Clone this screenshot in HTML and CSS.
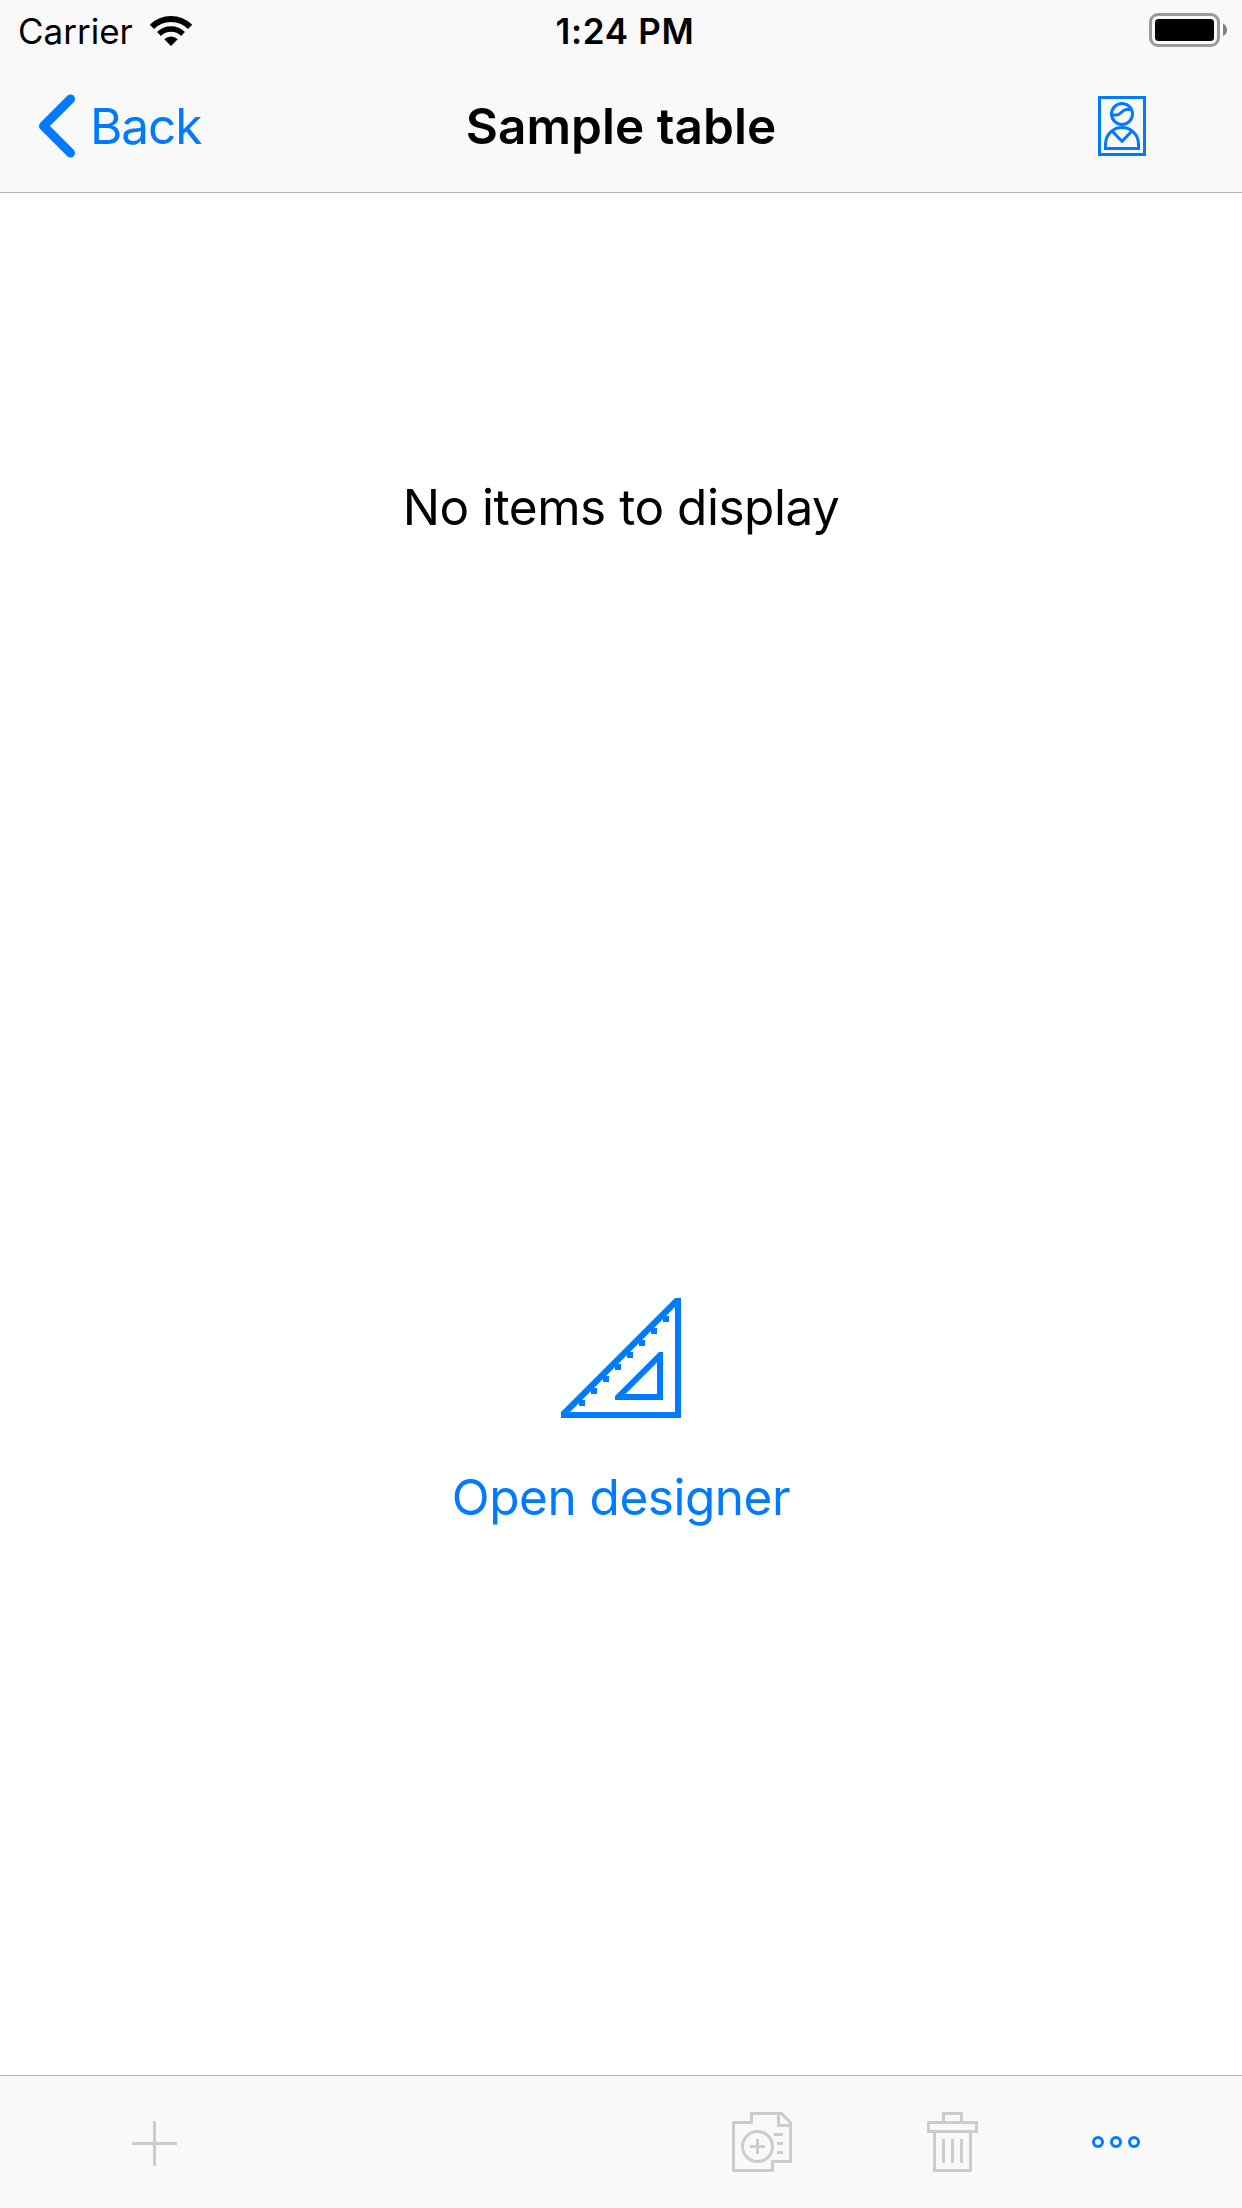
FILE: index.html
```html
<!DOCTYPE html>
<html lang="en">
<head>
<meta charset="utf-8">
<title>Sample table</title>
<link rel="stylesheet" href="styles.css">
</head>
<body>
<div class="screen">
  <header class="header">
    <div class="status">
      <div class="status-left">
        <span class="carrier">Carrier</span>
        <svg class="wifi" width="42" height="31" viewBox="0 0 42 31">
          <path d="M1.9 11.9A27 27 0 0 1 40.1 11.9" stroke-width="6"/>
          <path d="M9 19A17 17 0 0 1 33 19" stroke-width="5.5"/>
          <path class="solid" d="M21 31L14.3 24.3A9.5 9.5 0 0 1 27.7 24.3Z"/>
        </svg>
      </div>
      <span class="time">1:24 PM</span>
      <svg class="battery" width="79" height="34" viewBox="0 0 79 34">
        <rect x="1.5" y="1.5" width="68" height="31" rx="7.5" fill="none" stroke="#999" stroke-width="3"/>
        <rect x="6" y="6" width="59" height="22" rx="3.5"/>
        <path d="M74 10.5C77 12 78 14.500 78 17S77 21.500 74 23Z" fill="#808080"/>
      </svg>
    </div>
    <nav class="navbar">
      <a class="back">
        <svg width="38" height="64" viewBox="0 0 38 64"><path d="M32.500 5L5.500 32L32.500 59"/></svg>
        <span>Back</span>
      </a>
      <h1 class="title">Sample table</h1>
      <svg class="icon profile" width="48" height="60" viewBox="0 0 48 60">
        <rect x="1.5" y="1.5" width="45" height="57"/>
        <circle cx="24" cy="18" r="10.5"/>
        <path d="M13.500 19H18.500C23 19 24 13.500 28.500 13.500H33"/>
        <path d="M7.500 52.500V48A16.500 16.500 0 0 1 40.500 48V52.500Z"/>
        <path d="M14.500 35.500L24 45.300L33.500 35.500"/>
      </svg>
    </nav>
  </header>
  <main class="content">
    <p class="empty">No items to display</p>
    <a class="designer">
      <svg width="120" height="120" viewBox="0 0 120 120">
        <path fill-rule="evenodd" d="M0 120V114L114 0H120V120ZM9 114H114V9Z"/>
        <path fill-rule="evenodd" d="M54 102V98L98 54H102V102ZM64.500 96H96V64.500Z"/>
        <path d="M18 102h6v6h-6zM30 90h6v6h-6zM42 78h6v6h-6zM54 66h6v6h-6zM66 54h6v6h-6zM78 42h6v6h-6zM90 30h6v6h-6zM102 18h6v6h-6z"/>
      </svg>
      <span>Open designer</span>
    </a>
  </main>
  <footer class="toolbar">
    <svg class="icon add" width="45" height="45" viewBox="0 0 45 45"><path d="M22.500 0V45M0 22.500H45"/></svg>
    <svg class="icon copy" width="60" height="60" viewBox="0 0 60 60">
      <path d="M1.500 10.500H19.500V1.500H49.500L58.500 10.500V49.500H40.500V58.500H1.500Z"/>
      <path d="M46.500 1.500V13.500H58.500"/>
      <circle cx="25.500" cy="34.500" r="15"/>
      <path d="M25.500 27V42M18 34.500H33M42 22.500H51M45 31.500H51M45 40.500H51"/>
    </svg>
    <svg class="icon trash" width="51" height="60" viewBox="0 0 51 60">
      <path d="M16.500 10.500V1.500H34.500V10.500"/>
      <rect x="1.500" y="10.500" width="48" height="9"/>
      <path d="M7.500 19.500V58.500H43.500V19.500M16.500 27V51M25.500 27V51M34.500 27V51"/>
    </svg>
    <svg class="icon more" width="48" height="12" viewBox="0 0 48 12">
      <circle cx="6" cy="6" r="4.500"/><circle cx="24" cy="6" r="4.500"/><circle cx="42" cy="6" r="4.500"/>
    </svg>
  </footer>
</div>
</body>
</html>
```
FILE: styles.css
```css
* { box-sizing: border-box; margin: 0; }
body { background: #fff; font-family: Inter, "Liberation Sans", sans-serif; color: #000; }
svg { display: block; flex: none; }
.screen { width: 1242px; height: 2208px; display: flex; flex-direction: column; }
.header { height: 193px; background: #f9f9f9; border-bottom: 1px solid #b2b2b2; }
.status { height: 60px; display: grid; grid-template-columns: 1fr auto 1fr; align-items: center; font-size: 35px; line-height: 58px; padding: 0 14px 0 18px; }
.status-left { display: flex; align-items: center; }
.carrier { padding-top: 2px; width: 132px; white-space: nowrap; }
.wifi { fill: none; stroke: #000; }
.wifi .solid { fill: #000; stroke: none; }
.time { padding: 2px 0 0 4px; font-weight: 600; letter-spacing: 0.7px; white-space: nowrap; }
.battery { justify-self: end; }
.navbar { height: 132px; display: grid; grid-template-columns: 1fr auto 1fr; align-items: center; padding: 0 38px; font-size: 49.5px; line-height: 60px; }
.back { display: flex; align-items: center; gap: 14px; color: #007aff; letter-spacing: -1.1px; }
.back svg { fill: none; stroke: #007aff; stroke-width: 9; stroke-linecap: round; stroke-linejoin: round; }
.title { font-size: 49.5px; font-weight: 600; letter-spacing: 0.05px; white-space: nowrap; }
.icon { fill: none; stroke: #ccc; stroke-width: 3; }
.profile { justify-self: end; margin-right: 58px; stroke: #007aff; }
.content { flex: 1; display: flex; flex-direction: column; align-items: center; justify-content: space-between; padding: 284px 0 548px; font-size: 49.5px; line-height: 60px; letter-spacing: -0.48px; }
.designer { display: flex; flex-direction: column; align-items: center; gap: 49px; color: #007aff; fill: #007aff; }
.toolbar { height: 133px; border-top: 1px solid #b2b2b2; background: #f9f9f9; display: flex; align-items: center; padding: 0 102px 0 132px; }
.add { margin: 3px auto 0 0; }
.copy { margin-right: 135px; }
.trash { margin-right: 114px; }
.more { stroke: #007aff; }
```
